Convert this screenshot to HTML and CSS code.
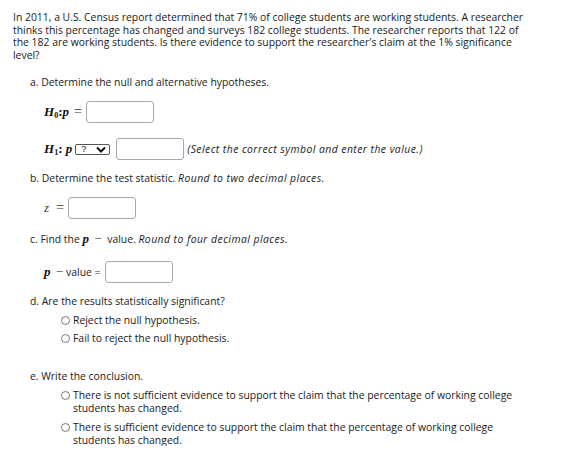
FILE: index.html
```html
<!DOCTYPE html>
<html>
<head>
<meta charset="utf-8">
<link rel="stylesheet" href="styles.css">
</head>
<body>
<div class="page">
  <p class="intro">In 2011, a U.S. Census report determined that 71% of college students are working students. A researcher thinks this percentage has changed and surveys 182 college students. The researcher reports that 122 of the 182 are working students. Is there evidence to support the researcher's claim at the 1% significance level?</p>

  <div class="part">
    <div class="label pa">a. Determine the null and alternative hypotheses.</div>
    <div class="row r-h0">
      <span class="math"><i>H</i><sub>0</sub>:<i>p</i><span class="eq">=</span></span>
      <span class="box"></span>
    </div>
    <div class="row r-h1">
      <span class="math"><i>H</i><sub>1</sub>: <i>p</i></span>
      <span class="select"><span class="q">?</span><svg width="10" height="7" viewBox="0 0 10 7"><path d="M1 1.5 L5 5.5 L9 1.5" fill="none" stroke="#111" stroke-width="2"/></svg></span>
      <span class="box"></span>
      <span class="note">(Select the correct symbol and enter the value.)</span>
    </div>

    <div class="label pb">b. Determine the test statistic. <em>Round to two decimal places.</em></div>
    <div class="row r-z">
      <span class="math zlab"><i>z</i> <span class="eq">=</span></span>
      <span class="box"></span>
    </div>

    <div class="label pc">c. Find the <span class="math"><i>p</i> <span class="minus">&minus;</span></span> value. <em>Round to four decimal places.</em></div>
    <div class="row r-p">
      <span class="math"><i>p</i> <span class="minus">&minus;</span></span><span class="plain">value =</span>
      <span class="box"></span>
    </div>

    <div class="label pd">d. Are the results statistically significant?</div>
    <div class="options od">
      <label class="opt"><span class="radio"></span><span>Reject the null hypothesis.</span></label>
      <label class="opt"><span class="radio"></span><span>Fail to reject the null hypothesis.</span></label>
    </div>

    <div class="label pe">e. Write the conclusion.</div>
    <div class="options oe">
      <label class="opt"><span class="radio"></span><span>There is not sufficient evidence to support the claim that the percentage of working college students has changed.</span></label>
      <label class="opt"><span class="radio"></span><span>There is sufficient evidence to support the claim that the percentage of working college students has changed.</span></label>
    </div>
  </div>
</div>
</body>
</html>
```

FILE: styles.css
```css
* { box-sizing: border-box; }
body {
  margin: 0;
  background: #fff;
  color: #1a1a1a;
  font-family: "Open Sans", "DejaVu Sans", sans-serif;
  font-size: 10.4px;
}
.page {
  padding: 11px 13px 0 13px;
}
.intro {
  margin: 0;
  line-height: 12.5px;
  width: 520px;
}
.part {
  padding-left: 17px;
}
.label {
  line-height: 13px;
  white-space: nowrap;
}
.label em, .note {
  font-style: italic;
  letter-spacing: 0.45px;
}
.pa { margin-top: 15px; }
.row {
  display: flex;
  align-items: center;
  padding-left: 14px;
}
.r-h0 { margin-top: 12px; }
.r-h1 { margin-top: 15px; }
.pb { margin-top: 12px; }
.r-z { margin-top: 12px; }
.pc { margin-top: 13px; }
.r-p { margin-top: 15px; }
.pd { margin-top: 12px; }
.math {
  font-family: "Liberation Serif", "DejaVu Serif", serif;
  font-size: 13px;
  font-weight: bold;
  color: #111;
}
.math i { font-style: italic; }
.math sub { font-size: 8px; vertical-align: -2px; font-style: normal; }
.eq { font-weight: normal; color: #333; margin-left: 5px; font-size: 14px; }
.zlab .eq { margin-left: 4px; }
.minus { font-weight: normal; color: #444; margin: 0 3px 0 2px; }
.zlab { font-weight: normal; color: #444; }
.plain { margin-right: 0; }
.box {
  flex: none;
  display: inline-block;
  width: 68px;
  height: 22px;
  border: 1px solid #a8a8a8;
  border-radius: 3px;
  background: #fff;
  margin-left: 4px;
}
.select {
  flex: none;
  display: inline-flex;
  align-items: center;
  justify-content: space-between;
  width: 35px;
  height: 11px;
  border: 1px solid #555;
  border-radius: 2px;
  padding: 0 3px 0 5px;
  margin-left: 3px;
  font-family: "Liberation Sans", sans-serif;
  font-size: 9px;
  line-height: 9px;
}
.r-h1 .box { margin-left: 6px; }
.note { margin-left: 3px; }
.options {
  padding-left: 31px;
  display: flex;
  flex-direction: column;
}
.od { margin-top: 6px; gap: 5px; }
.pe { margin-top: 26px; }
.oe { margin-top: 6px; gap: 7px; width: 500px; }
.opt {
  display: flex;
  align-items: flex-start;
  line-height: 12.5px;
}
.radio {
  flex: none;
  width: 9px;
  height: 9px;
  border: 1px solid #777;
  border-radius: 50%;
  margin: 2px 3px 0 0;
}
```
